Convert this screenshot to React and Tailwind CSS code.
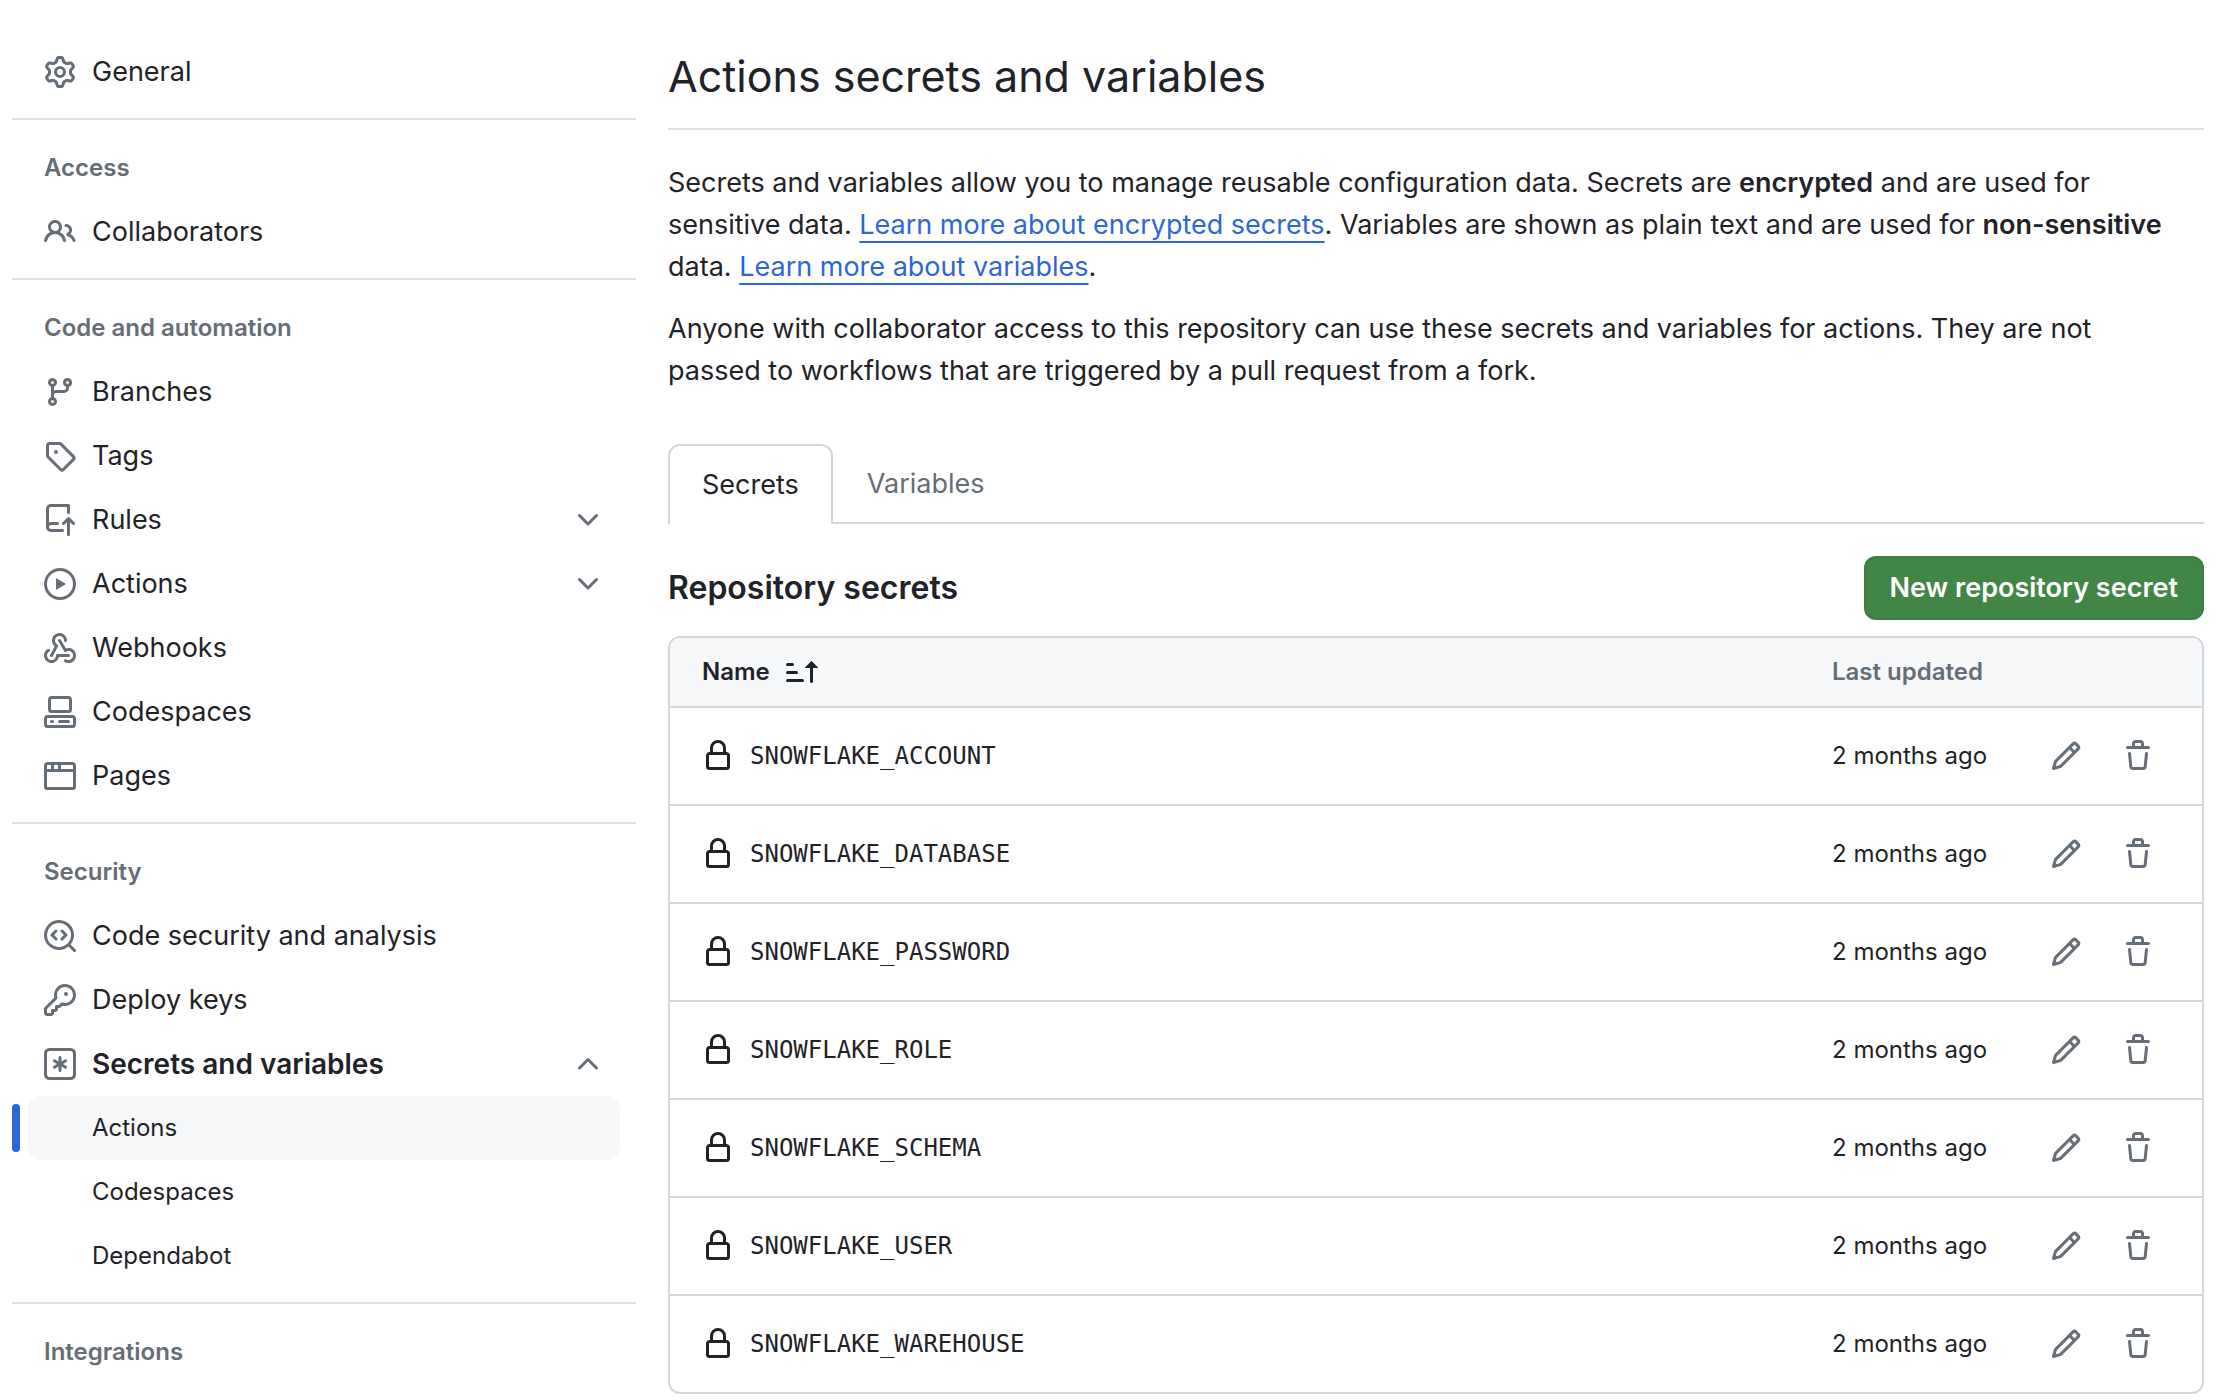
// 16px icon paths
const icons = {
  gear: "M8 0a8.2 8.2 0 0 1 .701.031C9.444.095 9.99.645 10.16 1.29l.288 1.107c.018.066.079.158.212.224.231.114.454.243.668.386.123.082.233.09.299.071l1.103-.303c.644-.176 1.392.021 1.82.63.27.385.506.792.704 1.218.315.675.111 1.422-.364 1.891l-.814.806c-.049.048-.098.147-.088.294.016.257.016.515 0 .772-.01.147.038.246.088.294l.814.806c.475.469.679 1.216.364 1.891a7.977 7.977 0 0 1-.704 1.217c-.428.61-1.176.807-1.82.63l-1.102-.302c-.067-.019-.177-.011-.3.071a5.909 5.909 0 0 1-.668.386c-.133.066-.194.158-.211.224l-.29 1.106c-.168.646-.715 1.196-1.458 1.26a8.006 8.006 0 0 1-1.402 0c-.743-.064-1.289-.614-1.458-1.26l-.289-1.106c-.018-.066-.079-.158-.212-.224a5.738 5.738 0 0 1-.668-.386c-.123-.082-.233-.09-.299-.071l-1.103.303c-.644.176-1.392-.021-1.82-.63a8.12 8.12 0 0 1-.704-1.218c-.315-.675-.111-1.422.363-1.891l.815-.806c.05-.048.098-.147.088-.294a6.214 6.214 0 0 1 0-.772c.01-.147-.038-.246-.088-.294l-.815-.806C.635 6.045.431 5.298.746 4.623a7.92 7.92 0 0 1 .704-1.217c.428-.61 1.176-.807 1.82-.63l1.102.302c.067.019.177.011.3-.071.214-.143.437-.272.668-.386.133-.066.194-.158.211-.224l.29-1.106C6.009.645 6.556.095 7.299.03 7.53.01 7.764 0 8 0Zm-.571 1.525c-.036.003-.108.036-.137.146l-.289 1.105c-.147.561-.549.967-.998 1.189-.173.086-.34.183-.5.29-.417.278-.97.423-1.529.27l-1.103-.303c-.109-.03-.175.016-.195.045-.22.312-.412.644-.573.99-.014.031-.021.11.059.19l.815.806c.411.406.562.957.53 1.456a4.709 4.709 0 0 0 0 .582c.032.499-.119 1.05-.53 1.456l-.815.806c-.081.08-.073.159-.059.19.162.346.353.677.573.989.02.03.085.076.195.046l1.102-.303c.56-.153 1.113-.008 1.53.27.161.107.328.204.501.29.447.222.85.629.997 1.189l.289 1.105c.029.109.101.143.137.146a6.6 6.6 0 0 0 1.142 0c.036-.003.108-.036.137-.146l.289-1.105c.147-.561.549-.967.998-1.189.173-.086.34-.183.5-.29.417-.278.97-.423 1.529-.27l1.103.303c.109.029.175-.016.195-.045.22-.313.411-.644.573-.99.014-.031.021-.11-.059-.19l-.815-.806c-.411-.406-.562-.957-.53-1.456a4.709 4.709 0 0 0 0-.582c-.032-.499.119-1.05.53-1.456l.815-.806c.081-.08.073-.159.059-.19a6.464 6.464 0 0 0-.573-.989c-.02-.03-.085-.076-.195-.046l-1.102.303c-.56.153-1.113.008-1.53-.27a4.44 4.44 0 0 0-.501-.29c-.447-.222-.85-.629-.997-1.189l-.289-1.105c-.029-.11-.101-.143-.137-.146a6.6 6.6 0 0 0-1.142 0ZM11 8a3 3 0 1 1-6 0 3 3 0 0 1 6 0ZM9.5 8a1.5 1.5 0 1 0-3.001.001A1.5 1.5 0 0 0 9.5 8Z",
  people:
    "M2 5.5a3.5 3.5 0 1 1 5.898 2.549 5.508 5.508 0 0 1 3.034 4.084.75.75 0 1 1-1.482.235 4 4 0 0 0-7.9 0 .75.75 0 0 1-1.482-.236A5.507 5.507 0 0 1 3.102 8.05 3.493 3.493 0 0 1 2 5.5ZM11 4a3.001 3.001 0 0 1 2.22 5.018 5.01 5.01 0 0 1 2.56 3.012.749.749 0 0 1-.885.954.752.752 0 0 1-.549-.514 3.507 3.507 0 0 0-2.522-2.372.75.75 0 0 1-.574-.73v-.352a.75.75 0 0 1 .416-.672A1.5 1.5 0 0 0 11 5.5.75.75 0 0 1 11 4Zm-5.5-.5a2 2 0 1 0-.001 3.999A2 2 0 0 0 5.5 3.5Z",
  branch:
    "M9.5 3.25a2.25 2.25 0 1 1 3 2.122V6A2.5 2.5 0 0 1 10 8.5H6a1 1 0 0 0-1 1v1.128a2.251 2.251 0 1 1-1.5 0V5.372a2.25 2.25 0 1 1 1.5 0v1.836A2.493 2.493 0 0 1 6 7h4a1 1 0 0 0 1-1v-.628A2.25 2.25 0 0 1 9.5 3.25Zm-6 0a.75.75 0 1 0 1.5 0 .75.75 0 0 0-1.5 0Zm8.25-.75a.75.75 0 1 0 0 1.5.75.75 0 0 0 0-1.5ZM4.25 12a.75.75 0 1 0 0 1.5.75.75 0 0 0 0-1.5Z",
  tag: "M1 7.775V2.75C1 1.784 1.784 1 2.75 1h5.025c.464 0 .91.184 1.238.513l6.25 6.25a1.75 1.75 0 0 1 0 2.474l-5.026 5.026a1.75 1.75 0 0 1-2.474 0l-6.25-6.25A1.752 1.752 0 0 1 1 7.775Zm1.5 0c0 .066.026.13.073.177l6.25 6.25a.25.25 0 0 0 .354 0l5.025-5.025a.25.25 0 0 0 0-.354l-6.25-6.25a.25.25 0 0 0-.177-.073H2.75a.25.25 0 0 0-.25.25ZM6 5a1 1 0 1 1 0 2 1 1 0 0 1 0-2Z",
  repoPush:
    "M1 2.5A2.5 2.5 0 0 1 3.5 0h8.75a.75.75 0 0 1 .75.75v3.5a.75.75 0 0 1-1.5 0V1.5h-8a1 1 0 0 0-1 1v6.708A2.493 2.493 0 0 1 3.5 9h3.25a.75.75 0 0 1 0 1.5H3.5a1 1 0 0 0 0 2h5.75a.75.75 0 0 1 0 1.5H3.5A2.5 2.5 0 0 1 1 11.5v-9Zm13.23 7.79h-.001l-1.224-1.224v6.184a.75.75 0 0 1-1.5 0V9.066L10.28 10.29a.75.75 0 0 1-1.06-1.061l2.505-2.504a.75.75 0 0 1 1.06 0L15.29 9.23a.751.751 0 0 1-.018 1.042.751.751 0 0 1-1.042.018Z",
  play: "M8 0a8 8 0 1 1 0 16A8 8 0 0 1 8 0ZM1.5 8a6.5 6.5 0 1 0 13 0 6.5 6.5 0 0 0-13 0Zm4.879-2.773 4.264 2.559a.25.25 0 0 1 0 .428l-4.264 2.559A.25.25 0 0 1 6 10.559V5.442a.25.25 0 0 1 .379-.215Z",
  webhook:
    "M5.5 4.25a2.25 2.25 0 0 1 4.5 0 .75.75 0 0 0 1.5 0 3.75 3.75 0 1 0-6.14 2.889l-2.272 4.258a.75.75 0 0 0 1.324.706L7 7.25a.75.75 0 0 0-.309-1.015A2.25 2.25 0 0 1 5.5 4.25Z M7.364 3.607a.75.75 0 0 1 1.03.257l2.608 4.349a3.75 3.75 0 1 1-.628 6.785.75.75 0 0 1 .752-1.299 2.25 2.25 0 1 0-.033-3.88.75.75 0 0 1-1.03-.256L7.107 4.636a.75.75 0 0 1 .257-1.03Z M2.9 8.776A.75.75 0 0 1 2.625 9.8 2.25 2.25 0 1 0 6 11.75a.75.75 0 0 1 .75-.751h5.5a.75.75 0 0 1 0 1.5H7.425a3.751 3.751 0 1 1-5.55-3.998.75.75 0 0 1 1.024.274Z",
  codespaces:
    "M0 11.25c0-.966.784-1.75 1.75-1.75h12.5c.966 0 1.75.784 1.75 1.75v3A1.75 1.75 0 0 1 14.25 16H1.75A1.75 1.75 0 0 1 0 14.25Zm2-9.5C2 .784 2.784 0 3.75 0h8.5C13.216 0 14 .784 14 1.75v5a1.75 1.75 0 0 1-1.75 1.75h-8.5A1.75 1.75 0 0 1 2 6.75Zm1.75-.25a.25.25 0 0 0-.25.25v5c0 .138.112.25.25.25h8.5a.25.25 0 0 0 .25-.25v-5a.25.25 0 0 0-.25-.25Zm-2 9.5a.25.25 0 0 0-.25.25v3c0 .138.112.25.25.25h12.5a.25.25 0 0 0 .25-.25v-3a.25.25 0 0 0-.25-.25Z M7 12.75a.75.75 0 0 1 .75-.75h4.5a.75.75 0 0 1 0 1.5h-4.5a.75.75 0 0 1-.75-.75Zm-4 0a.75.75 0 0 1 .75-.75h.5a.75.75 0 0 1 0 1.5h-.5a.75.75 0 0 1-.75-.75Z",
  browser:
    "M0 2.75C0 1.784.784 1 1.75 1h12.5c.966 0 1.75.784 1.75 1.75v10.5A1.75 1.75 0 0 1 14.25 15H1.75A1.75 1.75 0 0 1 0 13.25ZM14.5 6h-13v7.25c0 .138.112.25.25.25h12.5a.25.25 0 0 0 .25-.25Zm-6-3.5v2h6V2.75a.25.25 0 0 0-.25-.25ZM5 2.5v2h2v-2Zm-3.25 0a.25.25 0 0 0-.25.25V4.5h2v-2Z",
  codescan:
    "M8.47 4.97a.75.75 0 0 0 0 1.06L9.94 7.5 8.47 8.97a.75.75 0 1 0 1.06 1.06l2-2a.75.75 0 0 0 0-1.06l-2-2a.75.75 0 0 0-1.06 0ZM6.53 6.03a.75.75 0 0 0-1.06-1.06l-2 2a.75.75 0 0 0 0 1.06l2 2a.75.75 0 1 0 1.06-1.06L5.06 7.5l1.47-1.47Z M12.246 13.307a7.501 7.501 0 1 1 1.06-1.06l2.474 2.473a.749.749 0 0 1-.326 1.275.749.749 0 0 1-.734-.215ZM1.5 7.5a6.002 6.002 0 0 0 3.608 5.504 6.002 6.002 0 0 0 6.486-1.117.748.748 0 0 1 .292-.293A6 6 0 1 0 1.5 7.5Z",
  key: "M10.5 0a5.499 5.499 0 1 1-1.288 10.848l-.932.932a.749.749 0 0 1-.53.22H7v.75a.749.749 0 0 1-.22.53l-.5.5a.749.749 0 0 1-.53.22H5v.75a.749.749 0 0 1-.22.53l-.5.5a.749.749 0 0 1-.53.22h-2A1.75 1.75 0 0 1 0 14.25v-2c0-.199.079-.389.22-.53l4.932-4.932A5.5 5.5 0 0 1 10.5 0Zm-4 5.5c-.001.431.069.86.205 1.269a.75.75 0 0 1-.181.768L1.5 12.56v1.69c0 .138.112.25.25.25h1.69l.06-.06v-1.19a.75.75 0 0 1 .75-.75h1.19l.06-.06v-1.19a.75.75 0 0 1 .75-.75h1.19l1.023-1.025a.75.75 0 0 1 .768-.18A4 4 0 1 0 6.5 5.5ZM11 6a1 1 0 1 1 0-2 1 1 0 0 1 0 2Z",
  asterisk:
    "M2.75 0h10.5A2.75 2.75 0 0 1 16 2.75v10.5A2.75 2.75 0 0 1 13.25 16H2.75A2.75 2.75 0 0 1 0 13.25V2.75A2.75 2.75 0 0 1 2.75 0ZM1.5 2.75v10.5c0 .69.56 1.25 1.25 1.25h10.5c.69 0 1.25-.56 1.25-1.25V2.75c0-.69-.56-1.25-1.25-1.25H2.75c-.69 0-1.25.56-1.25 1.25ZM8 4a.75.75 0 0 1 .75.75V6.7l1.69-.975a.75.75 0 0 1 .75 1.3L9.5 8l1.69.976a.75.75 0 0 1-.75 1.298L8.75 9.3v1.951a.75.75 0 0 1-1.5 0V9.299l-1.69.976a.75.75 0 0 1-.75-1.3L6.5 8l-1.69-.975a.75.75 0 0 1 .75-1.3l1.69.976V4.75A.75.75 0 0 1 8 4Z",
  chevronDown:
    "M12.78 5.22a.749.749 0 0 1 0 1.06l-4.25 4.25a.749.749 0 0 1-1.06 0L3.22 6.28a.749.749 0 1 1 1.06-1.06L8 8.939l3.72-3.719a.749.749 0 0 1 1.06 0Z",
  chevronUp:
    "M3.22 10.53a.749.749 0 0 1 0-1.06l4.25-4.25a.749.749 0 0 1 1.06 0l4.25 4.25a.749.749 0 1 1-1.06 1.06L8 6.811 4.28 10.53a.749.749 0 0 1-1.06 0Z",
  lock: "M4 4a4 4 0 0 1 8 0v2h.25c.966 0 1.75.784 1.75 1.75v5.5A1.75 1.75 0 0 1 12.25 15h-8.5A1.75 1.75 0 0 1 2 13.25v-5.5C2 6.784 2.784 6 3.75 6H4Zm8.25 3.5h-8.5a.25.25 0 0 0-.25.25v5.5c0 .138.112.25.25.25h8.5a.25.25 0 0 0 .25-.25v-5.5a.25.25 0 0 0-.25-.25ZM10.5 6V4a2.5 2.5 0 1 0-5 0v2Z",
  pencil:
    "M11.013 1.427a1.75 1.75 0 0 1 2.474 0l1.086 1.086a1.75 1.75 0 0 1 0 2.474l-8.61 8.61c-.21.21-.47.364-.756.445l-3.251.93a.75.75 0 0 1-.927-.928l.929-3.25c.081-.286.235-.547.445-.758l8.61-8.61Zm.176 4.823L9.75 4.81l-6.286 6.287a.253.253 0 0 0-.064.108l-.558 1.953 1.953-.558a.253.253 0 0 0 .108-.064Zm1.238-3.763a.25.25 0 0 0-.354 0L10.811 3.75l1.439 1.44 1.263-1.263a.25.25 0 0 0 0-.354Z",
  trash:
    "M11 1.75V3h2.25a.75.75 0 0 1 0 1.5H2.75a.75.75 0 0 1 0-1.5H5V1.75C5 .784 5.784 0 6.75 0h2.5C10.216 0 11 .784 11 1.75ZM4.496 6.675l.66 6.6a.25.25 0 0 0 .249.225h5.19a.25.25 0 0 0 .249-.225l.66-6.6a.75.75 0 0 1 1.492.149l-.66 6.6A1.748 1.748 0 0 1 10.595 15h-5.19a1.75 1.75 0 0 1-1.741-1.575l-.66-6.6a.75.75 0 1 1 1.492-.15ZM6.5 1.75V3h3V1.75a.25.25 0 0 0-.25-.25h-2.5a.25.25 0 0 0-.25.25Z",
  sortAsc:
    "m12.927 2.573 3 3A.25.25 0 0 1 15.75 6H13.5v6.75a.75.75 0 0 1-1.5 0V6H9.75a.25.25 0 0 1-.177-.427l3-3a.25.25 0 0 1 .354 0ZM0 12.25a.75.75 0 0 1 .75-.75h7.5a.75.75 0 0 1 0 1.5H.75a.75.75 0 0 1-.75-.75Zm0-4a.75.75 0 0 1 .75-.75h4.5a.75.75 0 0 1 0 1.5H.75A.75.75 0 0 1 0 8.25Zm0-4a.75.75 0 0 1 .75-.75h2.5a.75.75 0 0 1 0 1.5H.75A.75.75 0 0 1 0 4.25Z",
};

const groups = [
  { items: [{ label: "General", icon: "gear" }] },
  { title: "Access", items: [{ label: "Collaborators", icon: "people" }] },
  {
    title: "Code and automation",
    items: [
      { label: "Branches", icon: "branch" },
      { label: "Tags", icon: "tag" },
      { label: "Rules", icon: "repoPush", expandable: true },
      { label: "Actions", icon: "play", expandable: true },
      { label: "Webhooks", icon: "webhook" },
      { label: "Codespaces", icon: "codespaces" },
      { label: "Pages", icon: "browser" },
    ],
  },
  {
    title: "Security",
    items: [
      { label: "Code security and analysis", icon: "codescan" },
      { label: "Deploy keys", icon: "key" },
      {
        label: "Secrets and variables",
        icon: "asterisk",
        expandable: true,
        children: ["Actions", "Codespaces", "Dependabot"],
      },
    ],
  },
  { title: "Integrations", items: [] },
];

const secrets = [
  "SNOWFLAKE_ACCOUNT",
  "SNOWFLAKE_DATABASE",
  "SNOWFLAKE_PASSWORD",
  "SNOWFLAKE_ROLE",
  "SNOWFLAKE_SCHEMA",
  "SNOWFLAKE_USER",
  "SNOWFLAKE_WAREHOUSE",
];

function Icon({ name, className = "" }) {
  return (
    <svg viewBox="0 0 16 16" fill="currentColor" aria-hidden="true" className={`size-8 shrink-0 ${className}`}>
      <path d={icons[name]} />
    </svg>
  );
}

function NavItem({ item }) {
  const open = Boolean(item.children);
  const row = "flex h-16 w-full items-center gap-4 rounded-xl px-4 text-left";

  return (
    <li>
      {item.expandable ? (
        <button
          type="button"
          aria-expanded={open}
          className={`${row} ${open ? "text-[28px] font-semibold" : "text-[27px]"}`}
        >
          <Icon name={item.icon} className="text-[#656d76]" />
          <span className="grow">{item.label}</span>
          <Icon name={open ? "chevronUp" : "chevronDown"} className="text-[#656d76]" />
        </button>
      ) : (
        <a href="#" className={`${row} text-[27px]`}>
          <Icon name={item.icon} className="text-[#656d76]" />
          <span>{item.label}</span>
        </a>
      )}

      {open && (
        <ul>
          {item.children.map((child, i) => (
            <li key={child} className="relative">
              {i === 0 && <span className="absolute top-2 -left-4 h-12 w-2 rounded-full bg-[#2f66d9]" />}
              <a
                href="#"
                aria-current={i === 0 ? "page" : undefined}
                className={`flex h-16 items-center rounded-xl pl-16 text-2xl ${i === 0 ? "bg-[#f6f8fa]" : ""}`}
              >
                {child}
              </a>
            </li>
          ))}
        </ul>
      )}
    </li>
  );
}

function Sidebar() {
  return (
    <nav aria-label="Repository settings" className="w-[624px] shrink-0">
      {groups.map((group, i) => (
        <section key={i} className={i > 0 ? "mt-3.5 border-t-2 border-[#dde2e7] pt-4" : ""}>
          {group.title && (
            <h2 className="flex h-16 items-center px-8 text-2xl font-semibold text-[#656d76]">{group.title}</h2>
          )}
          <ul className="px-4">
            {group.items.map((item) => (
              <NavItem key={item.label} item={item} />
            ))}
          </ul>
        </section>
      ))}
    </nav>
  );
}

function SecretsTable() {
  return (
    <div className="mt-4 overflow-hidden rounded-xl border-2 border-[#d0d7de]">
      <table className="w-full text-left text-2xl">
        <thead>
          <tr className="h-[69px] border-b-2 border-[#d0d7de] bg-[#f6f8fa]">
            <th className="pl-8 font-semibold">
              <button type="button" className="flex items-center gap-4">
                Name
                <Icon name="sortAsc" />
              </button>
            </th>
            <th className="w-[202px] font-semibold text-[#656d76]">Last updated</th>
            <th className="w-[168px]" aria-label="Manage" />
          </tr>
        </thead>
        <tbody>
          {secrets.map((name) => (
            <tr key={name} className="h-[98px] border-b-2 border-[#d0d7de] last:h-[97px] last:border-b-0">
              <td className="pl-8">
                <div className="flex items-center gap-4">
                  <Icon name="lock" />
                  <code className="font-['DejaVu_Sans_Mono',monospace] text-2xl">{name}</code>
                </div>
              </td>
              <td>2 months ago</td>
              <td>
                <div className="flex gap-2 text-[#656d76]">
                  <button type="button" aria-label={`Edit ${name}`} className="flex size-16 items-center justify-center">
                    <Icon name="pencil" />
                  </button>
                  <button type="button" aria-label={`Delete ${name}`} className="flex size-16 items-center justify-center">
                    <Icon name="trash" />
                  </button>
                </div>
              </td>
            </tr>
          ))}
        </tbody>
      </table>
    </div>
  );
}

export default function App() {
  return (
    <div className="flex gap-8 bg-white pt-10 pr-3.5 pl-3 font-['Inter','Liberation_Sans',sans-serif] text-[#1f2328]">
      <Sidebar />

      <main className="min-w-0 grow">
        <h1 className="border-b-2 border-[#dde2e7] pb-4 text-[43px] leading-[72px]">Actions secrets and variables</h1>

        <p className="mt-8 text-[27px] leading-[42px]">
          Secrets and variables allow you to manage reusable configuration data. Secrets are{" "}
          <strong className="font-semibold">encrypted</strong> and are used for sensitive data.{" "}
          <a href="#" className="text-[#2f66d9] underline decoration-2 underline-offset-[7px]">
            Learn more about encrypted secrets
          </a>
          . Variables are shown as plain text and are used for{" "}
          <strong className="font-semibold">non-sensitive</strong> data.{" "}
          <a href="#" className="text-[#2f66d9] underline decoration-2 underline-offset-[7px]">
            Learn more about variables
          </a>
          .
        </p>
        <p className="mt-5 pr-8 text-[27px] leading-[42px]">
          Anyone with collaborator access to this repository can use these secrets and variables for actions. They are
          not passed to workflows that are triggered by a pull request from a fork.
        </p>

        {/* Tabs */}
        <div role="tablist" className="mt-[52px] flex h-20 text-[27px]">
          <button
            type="button"
            role="tab"
            aria-selected="true"
            className="rounded-t-xl border-2 border-b-0 border-[#d0d7de] px-8"
          >
            Secrets
          </button>
          <div className="flex grow border-b-2 border-[#d0d7de] pt-0.5">
            <button type="button" role="tab" aria-selected="false" className="px-[34px] text-[#656d76]">
              Variables
            </button>
          </div>
        </div>

        <div className="mt-8 flex items-center justify-between">
          <h2 className="text-[32px] font-semibold">Repository secrets</h2>
          <button
            type="button"
            className="h-16 rounded-xl border-2 border-[#3d7b41] bg-[#428646] px-6 text-[27px] font-semibold text-white"
          >
            New repository secret
          </button>
        </div>

        <SecretsTable />
      </main>
    </div>
  );
}
